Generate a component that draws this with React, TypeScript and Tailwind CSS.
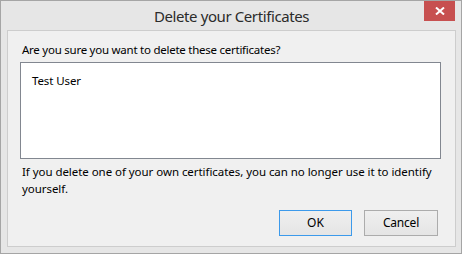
import React from "react";

export default function App() {
  const font = { fontFamily: '"Noto Sans", "Open Sans", sans-serif' };
  return (
    <div
      className="w-[462px] h-[254px] bg-[#e6e6e6] border border-[#a5a5a5] flex flex-col"
      style={font}
    >
      <div className="relative h-[29px] flex items-center justify-center shrink-0">
        <span className="text-[15px] tracking-[-0.4px] text-[#2b2b2b] leading-none pl-[1px] pt-[1px]">
          Delete your Certificates
        </span>
        <button className="absolute top-0 left-[423px] w-[31px] h-[20px] bg-[#c75050] flex items-center justify-center">
          <svg width="10" height="8" viewBox="0 0 10 8">
            <path d="M1 0.5 L9 7.5 M9 0.5 L1 7.5" stroke="#fff" strokeWidth="2" />
          </svg>
        </button>
      </div>
      <div className="ml-[6px] w-[449px] h-[217px] bg-[#f0f0f0] border border-[#cdcdcd] flex flex-col pl-[12px] pt-[11px]">
        <div className="text-[11.5px] tracking-[-0.25px] leading-[16px] text-black pl-[2px]">
          Are you sure you want to delete these certificates?
        </div>
        <div className="mt-[4px] w-[421px] h-[97px] bg-white border border-[#828790] pl-[11px] pt-[10px]">
          <div className="text-[11.5px] tracking-[-0.1px] leading-[16px] text-black">Test User</div>
        </div>
        <div className="mt-[5px] pl-[2px] text-[11.5px] tracking-[-0.05px] leading-[16.5px] text-black">
          If you delete one of your own certificates, you can no longer use it to identify
          <br />
          yourself.
        </div>
        <div className="flex gap-[12px] mt-[13px] pl-[259px]">
          <button className="w-[73px] h-[26px] border border-[#3c9aeb] bg-gradient-to-b from-[#efefef] to-[#e5e5e5] text-[12px] text-black flex items-center justify-center">
            OK
          </button>
          <button className="w-[74px] h-[26px] border border-[#acacac] bg-gradient-to-b from-[#efefef] to-[#e5e5e5] text-[12px] tracking-[-0.2px] text-black flex items-center justify-center">
            Cancel
          </button>
        </div>
      </div>
    </div>
  );
}
